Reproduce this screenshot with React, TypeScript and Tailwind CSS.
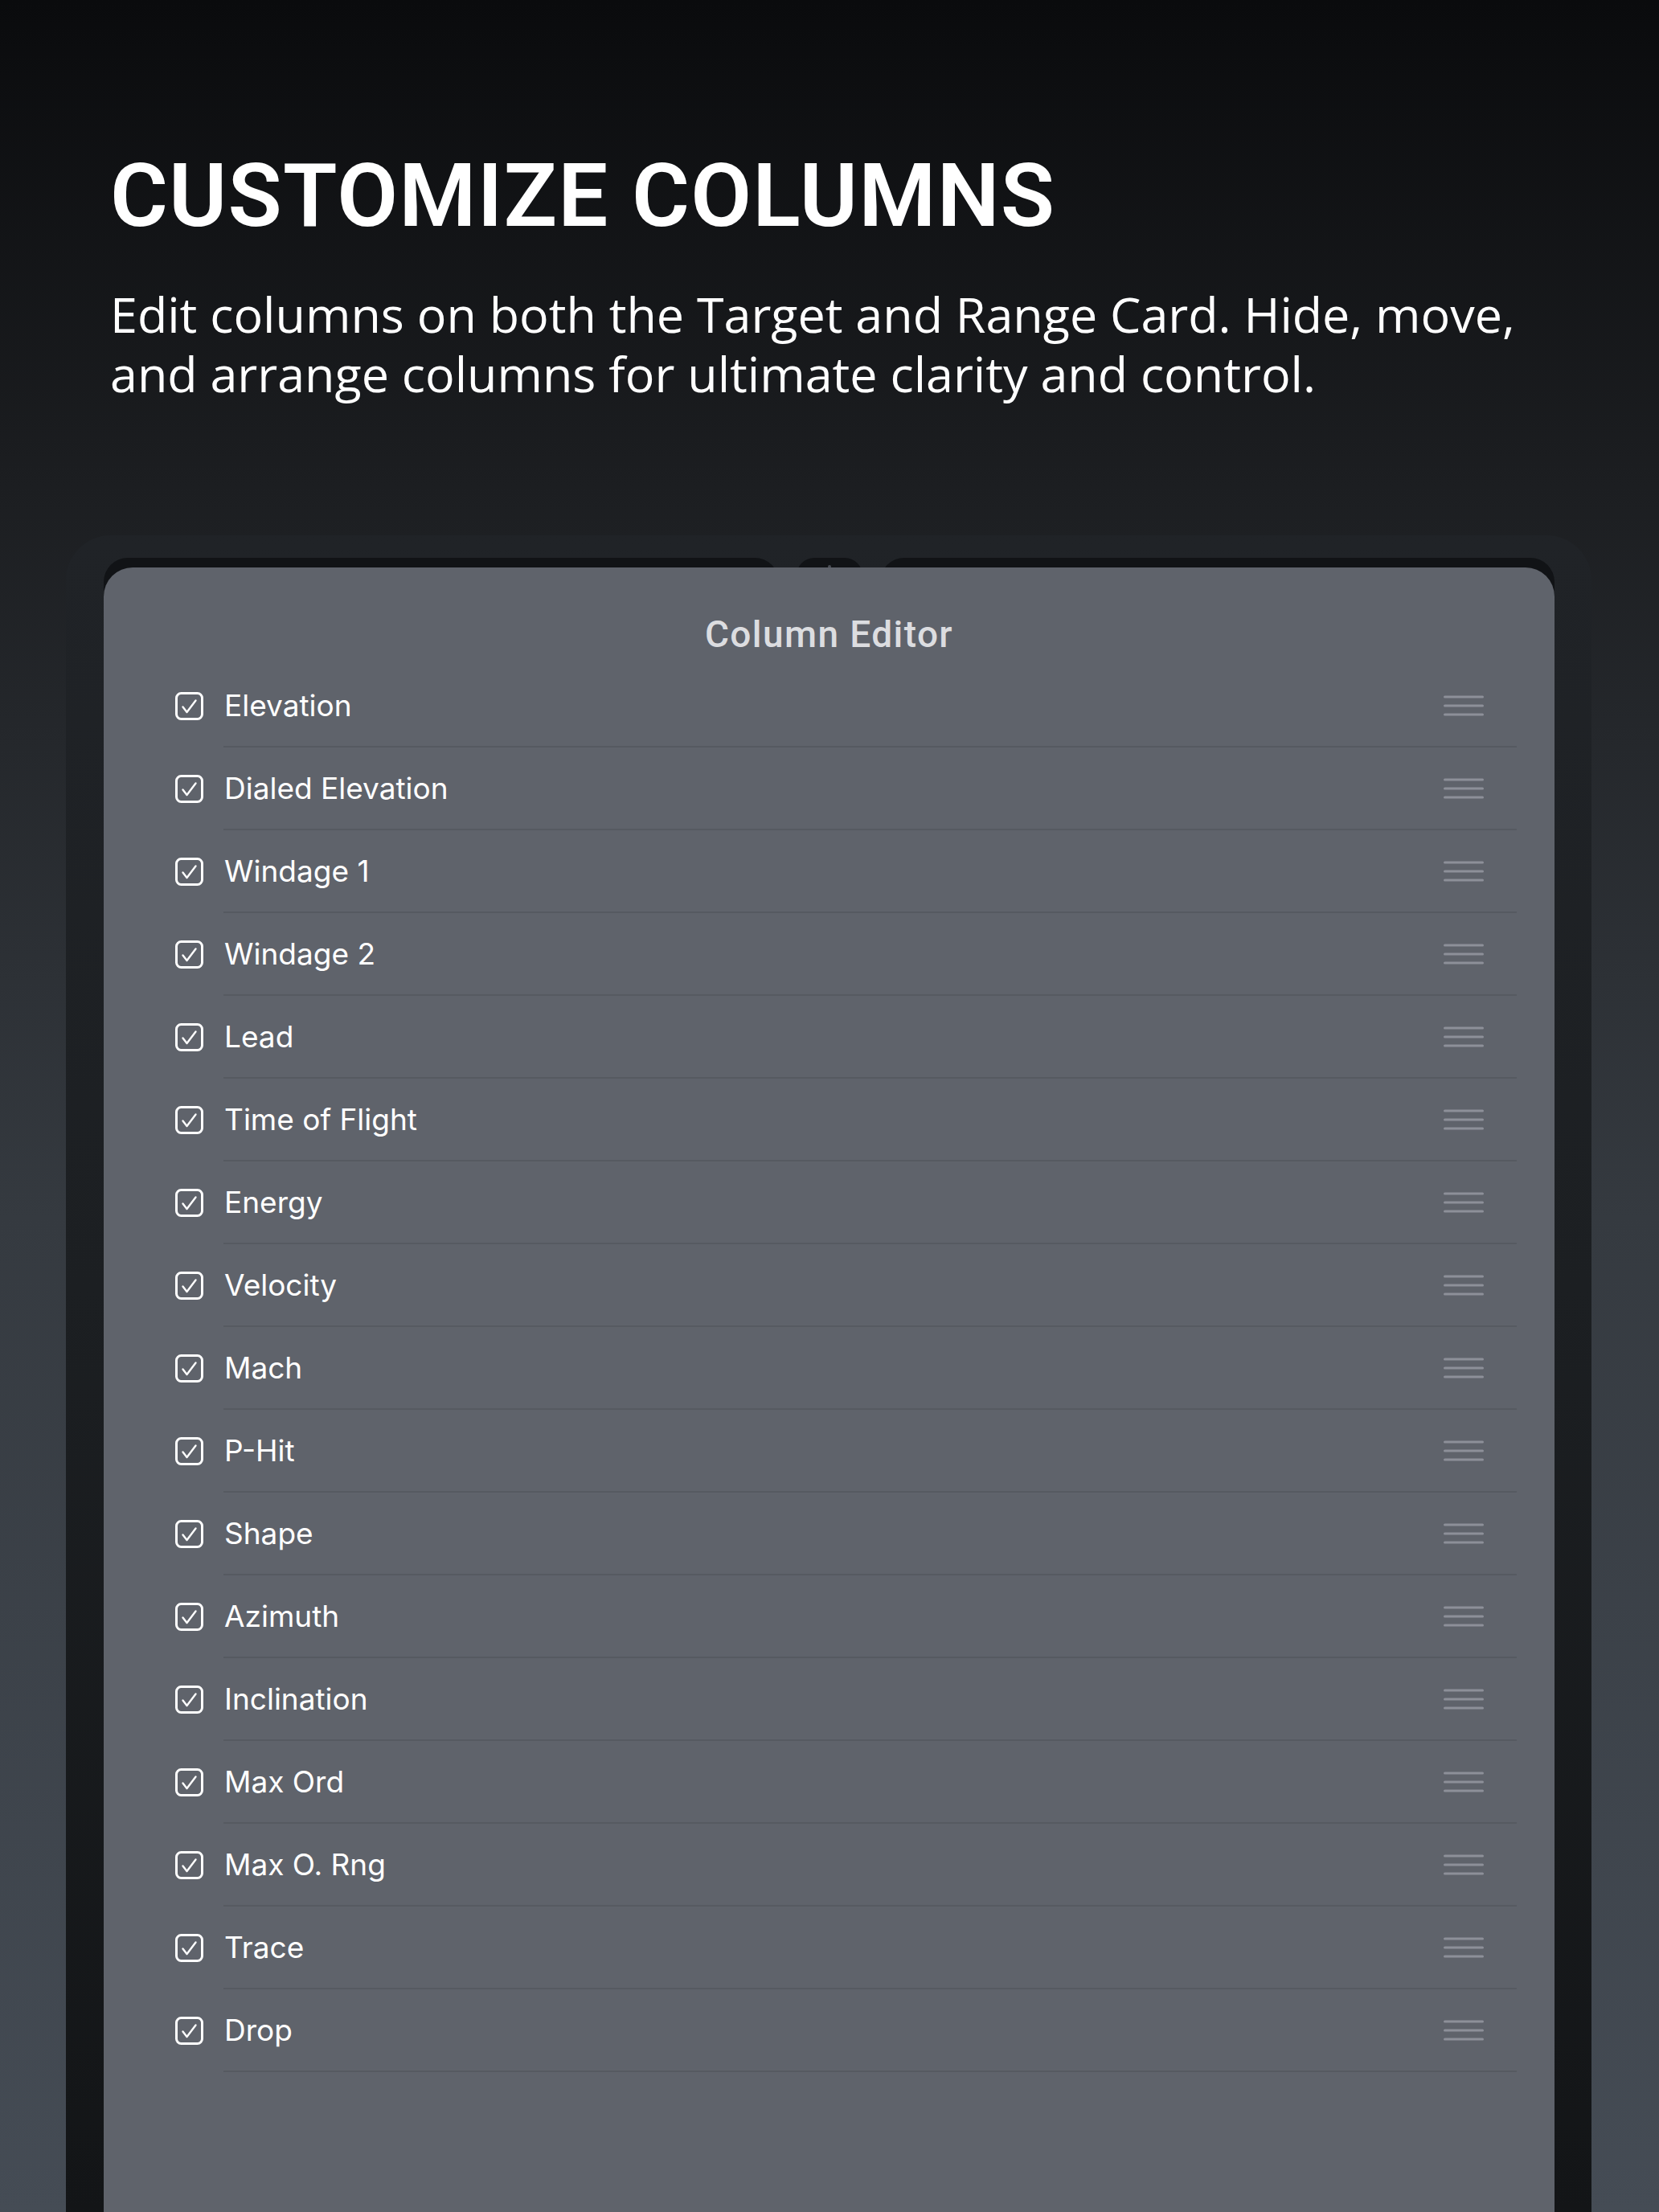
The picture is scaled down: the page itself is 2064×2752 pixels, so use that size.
import React from 'react';

const COLUMNS = [
  'Elevation',
  'Dialed Elevation',
  'Windage 1',
  'Windage 2',
  'Lead',
  'Time of Flight',
  'Energy',
  'Velocity',
  'Mach',
  'P-Hit',
  'Shape',
  'Azimuth',
  'Inclination',
  'Max Ord',
  'Max O. Rng',
  'Trace',
  'Drop',
];

const CheckBox: React.FC = () => (
  <svg width="35" height="35" viewBox="0 0 35 35" fill="none">
    <rect x="1.5" y="1.5" width="32" height="32" rx="6" stroke="#ffffff" strokeWidth="3" />
    <path d="M9.5 18.5 L14.5 25 L25.5 10.5" stroke="#ffffff" strokeWidth="2.4" strokeLinecap="round" strokeLinejoin="round" />
  </svg>
);

const DragHandle: React.FC = () => (
  <svg width="50" height="26" viewBox="0 0 50 26" fill="none">
    <path d="M1.5 2 H48.5 M1.5 13 H48.5 M1.5 24 H48.5" stroke="#8d9099" strokeWidth="3" strokeLinecap="round" />
  </svg>
);

const ColumnRow: React.FC<{ label: string }> = ({ label }) => (
  <div className="flex">
    <div className="w-[149px] shrink-0 flex items-center pl-[89px]">
      <CheckBox />
    </div>
    <div className="flex-1 mr-[47px] h-[103px] border-b-2 border-[#565a61] flex items-center justify-between pl-[1px] pr-[41px]">
      <span className="text-[37px] text-white font-['Inter',sans-serif]">{label}</span>
      <DragHandle />
    </div>
  </div>
);

export default function App() {
  return (
    <div className="w-[2064px] h-[2752px] overflow-hidden flex flex-col bg-[linear-gradient(180deg,#0a0b0d_0%,#1c1e21_22%,#353a40_55%,#454c55_100%)]">
      <header className="pl-[137px] pt-[189px]">
        <h1 className="text-[110px] leading-[110px] font-semibold text-white font-['Roboto',sans-serif] tracking-[1.2px]">
          CUSTOMIZE COLUMNS
        </h1>
        <p className="mt-[55px] text-[61px] leading-[74px] text-white font-['Open_Sans',sans-serif] w-[1850px]">
          Edit columns on both the Target and Range Card. Hide, move,
          <br />
          and arrange columns for ultimate clarity and control.
        </p>
      </header>

      <div className="mt-[164px] ml-[82px] w-[1898px] flex-1 rounded-t-[56px] bg-[linear-gradient(180deg,#202327_0%,#1c1f22_45%,#131517_100%)] pt-[28px] pl-[47px] pr-[46px] flex flex-col">
        <div className="flex h-[52px] gap-[22px]">
          <div className="w-[840px] bg-[#111316] rounded-t-[30px]" />
          <div className="w-[82px] bg-[#111316] rounded-t-[22px] flex justify-center pt-[9px]">
            <div className="w-[4px] h-[4px] rounded-full bg-[#4a4e55]" />
          </div>
          <div className="flex-1 bg-[#111316] rounded-t-[30px]" />
        </div>
        <div className="-mt-[40px] relative flex-1 bg-[#5f636b] rounded-t-[36px]">
          <div className="pt-[61px] h-[121px] text-center">
            <h2 className="text-[46px] leading-[45px] font-medium text-[#dcdde0] font-['Roboto',sans-serif] tracking-[1.4px]">
              Column Editor
            </h2>
          </div>
          {COLUMNS.map((c) => (
            <ColumnRow key={c} label={c} />
          ))}
        </div>
      </div>
    </div>
  );
}
